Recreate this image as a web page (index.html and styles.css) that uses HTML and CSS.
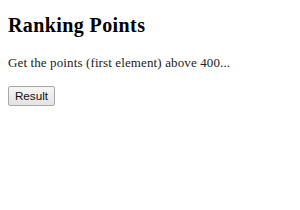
FILE: index.html
```html
<!DOCTYPE html>
<html>
<head>
<meta charset="utf-8">
<link rel="stylesheet" href="styles.css">
</head>
<body class="page">
<h2 class="title">Ranking Points</h2>
<p class="desc">Get the points (first element) above 400...</p>
<button class="btn">Result</button>
</body>
</html>
```
FILE: styles.css
```css
.page {
  margin: 0;
  padding: 14px 8px 8px;
  font-family: "Liberation Serif", "Times New Roman", serif;
  font-size: 13px;
  color: #111;
  background: #fff;
}
.title {
  font-size: 20px;
  line-height: 22px;
  letter-spacing: 0.4px;
  font-weight: bold;
  margin: 0 0 20px;
  color: #000;
}
.desc {
  margin: 0 0 16px;
  line-height: 14px;
  letter-spacing: 0.12px;
  color: #222;
}
.btn {
  display: block;
  box-sizing: border-box;
  width: 47px;
  height: 20px;
  font-family: "Liberation Sans", Arial, sans-serif;
  font-size: 11.7px;
  line-height: 12px;
  padding: 3px 0;
  color: #111;
  background: linear-gradient(#f6f6f6, #e3e3e3);
  border: 1px solid #a8a8a8;
  border-radius: 2px;
}
```
